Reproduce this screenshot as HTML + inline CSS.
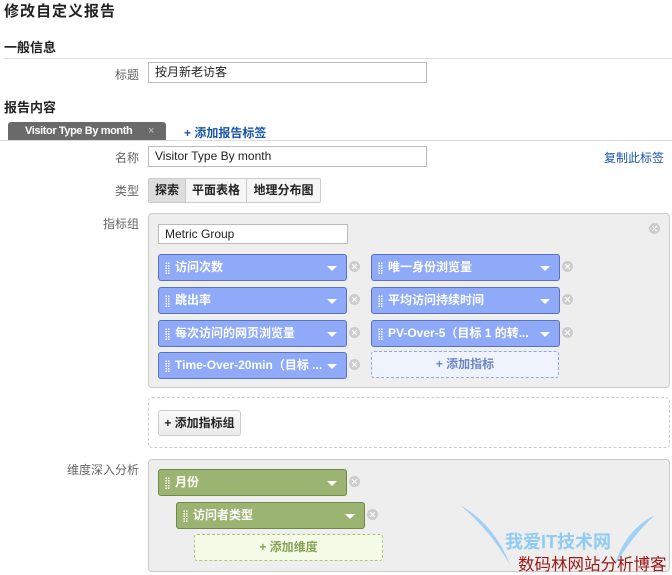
<!DOCTYPE html>
<html><head><meta charset="utf-8"><style>
*{margin:0;padding:0;box-sizing:border-box}
body{width:672px;height:574px;background:#fff;position:relative;overflow:hidden;font-family:"Liberation Sans","Noto Sans CJK SC",sans-serif;font-size:12px;color:#222}
.a{position:absolute;white-space:nowrap}
.lbl{position:absolute;right:533px;color:#666;font-size:12px}
.inp{position:absolute;border:1px solid #bbb;background:#fff;padding:0 6px;line-height:18px;font-size:12px;color:#222}
.h{font-weight:bold}
.chip{position:absolute;width:189px;height:27px;border:1px solid #5b72b8;border-radius:3px;background:#8eaaf8;color:#fff;font-weight:bold;line-height:25px;padding-left:16px;font-size:12px;overflow:hidden}
.chip.g{background:#9cb472;border-color:#6e8a45}
.chip:before{content:"";position:absolute;left:6px;top:7px;width:5px;height:12px;background-image:radial-gradient(circle,#fff 0.8px,transparent 1px);background-size:2.5px 2.5px}
.chip:after{content:"";position:absolute;right:9px;top:11px;border-left:5px solid transparent;border-right:5px solid transparent;border-top:5px solid #fff}
.x{position:absolute;width:11px;height:11px;border-radius:50%;background:#ccc}
.x:before,.x:after{content:"";position:absolute;left:5px;top:2px;width:1px;height:7px;background:#fff;transform:rotate(45deg)}
.x:after{transform:rotate(-45deg)}
</style></head><body>
<div class="a h" style="left:4px;top:0px;font-size:15px;letter-spacing:1px">修改自定义报告</div>
<div class="a h" style="left:4px;top:37px;font-size:13px">一般信息</div>
<div class="a" style="left:4px;top:58px;width:668px;height:1px;background:#ddd"></div>
<div class="lbl" style="top:66px">标题</div>
<div class="inp" style="left:148px;top:62px;width:279px;height:21px">按月新老访客</div>
<div class="a h" style="left:4px;top:97px;font-size:13px">报告内容</div>
<div class="a" style="left:8px;top:122px;width:158px;height:19px;background:#6a6a6a;border-radius:3px 3px 0 0;color:#fff;font-weight:bold;font-size:11px;letter-spacing:-0.4px;line-height:19px;padding-left:17px">Visitor Type By month<span style="color:#ccc;position:absolute;left:140px;font-weight:normal">×</span></div>
<div class="a h" style="left:184px;top:124px;color:#1a56a8;font-size:12px">+ 添加报告标签</div>
<div class="a" style="left:0;top:140px;width:672px;height:1px;background:#ddd"></div>
<div class="lbl" style="top:149px">名称</div>
<div class="inp" style="left:148px;top:146px;width:279px;height:21px">Visitor Type By month</div>
<div class="a" style="left:604px;top:149px;color:#1a56a8">复制此标签</div>
<div class="lbl" style="top:182px">类型</div>
<div class="a" style="left:148px;top:178px;height:25px;border:1px solid #ccc;border-radius:2px;display:flex;font-weight:bold;line-height:23px;background:#f6f6f6">
<div style="width:37px;text-align:center;background:#ddd;border-right:1px solid #ccc">探索</div>
<div style="width:61px;text-align:center;border-right:1px solid #ccc">平面表格</div>
<div style="width:73px;text-align:center">地理分布图</div></div>
<div class="lbl" style="top:215px">指标组</div>
<div class="a" style="left:148px;top:213px;width:522px;height:175px;background:#eee;border:1px solid #ccc;border-radius:4px"></div>
<div class="inp" style="left:158px;top:224px;width:190px;height:20px;line-height:18px">Metric Group</div>
<div class="x" style="left:649px;top:223px"></div>
<div class="chip" style="left:158px;top:254px">访问次数</div><div class="x" style="left:349px;top:261px"></div>
<div class="chip" style="left:371px;top:254px">唯一身份浏览量</div><div class="x" style="left:562px;top:261px"></div>
<div class="chip" style="left:158px;top:287px">跳出率</div><div class="x" style="left:349px;top:294px"></div>
<div class="chip" style="left:371px;top:287px">平均访问持续时间</div><div class="x" style="left:562px;top:294px"></div>
<div class="chip" style="left:158px;top:320px">每次访问的网页浏览量</div><div class="x" style="left:349px;top:327px"></div>
<div class="chip" style="left:371px;top:320px">PV-Over-5（目标 1 的转...</div><div class="x" style="left:562px;top:327px"></div>
<div class="chip" style="left:158px;top:352px">Time-Over-20min（目标 ...</div><div class="x" style="left:349px;top:359px"></div>
<div class="a" style="left:371px;top:351px;width:188px;height:27px;border:1px dashed #8ea8dc;background:#eef3fc;border-radius:3px;text-align:center;line-height:25px;color:#6f86c4;font-weight:bold">+ 添加指标</div>
<div class="a" style="left:148px;top:397px;width:522px;height:51px;border:1px dashed #ccc;border-radius:4px"></div>
<div class="a" style="left:158px;top:410px;width:83px;height:26px;border:1px solid #ccc;border-radius:3px;background:linear-gradient(#fafafa,#eaeaea);font-weight:bold;text-align:center;line-height:24px">+ 添加指标组</div>
<div class="lbl" style="top:461px">维度深入分析</div>
<div class="a" style="left:148px;top:459px;width:522px;height:113px;background:#eee;border:1px solid #ccc;border-radius:4px"></div>
<div class="chip g" style="left:158px;top:469px">月份</div><div class="x" style="left:349px;top:476px"></div>
<div class="chip g" style="left:176px;top:502px">访问者类型</div><div class="x" style="left:367px;top:509px"></div>
<div class="a" style="left:194px;top:534px;width:189px;height:27px;border:1px dashed #a9c47e;background:#f4fbe6;border-radius:3px;text-align:center;line-height:25px;color:#86a355;font-weight:bold">+ 添加维度</div>
<svg class="a" style="left:455px;top:495px" width="215" height="75"><path d="M5 10 Q40 30 55 70 Q35 35 5 10Z M200 20 Q170 35 160 70 Q178 40 200 20Z" fill="#9fd0f5"/></svg>
<div class="a" style="left:505px;top:528px;color:#8fcbf3;font-size:18px;font-weight:bold">我爱IT技术网</div>
<div class="a" style="left:518px;top:551px;color:#9a1818;font-size:16.5px">数码林网站分析博客</div>
</body></html>
